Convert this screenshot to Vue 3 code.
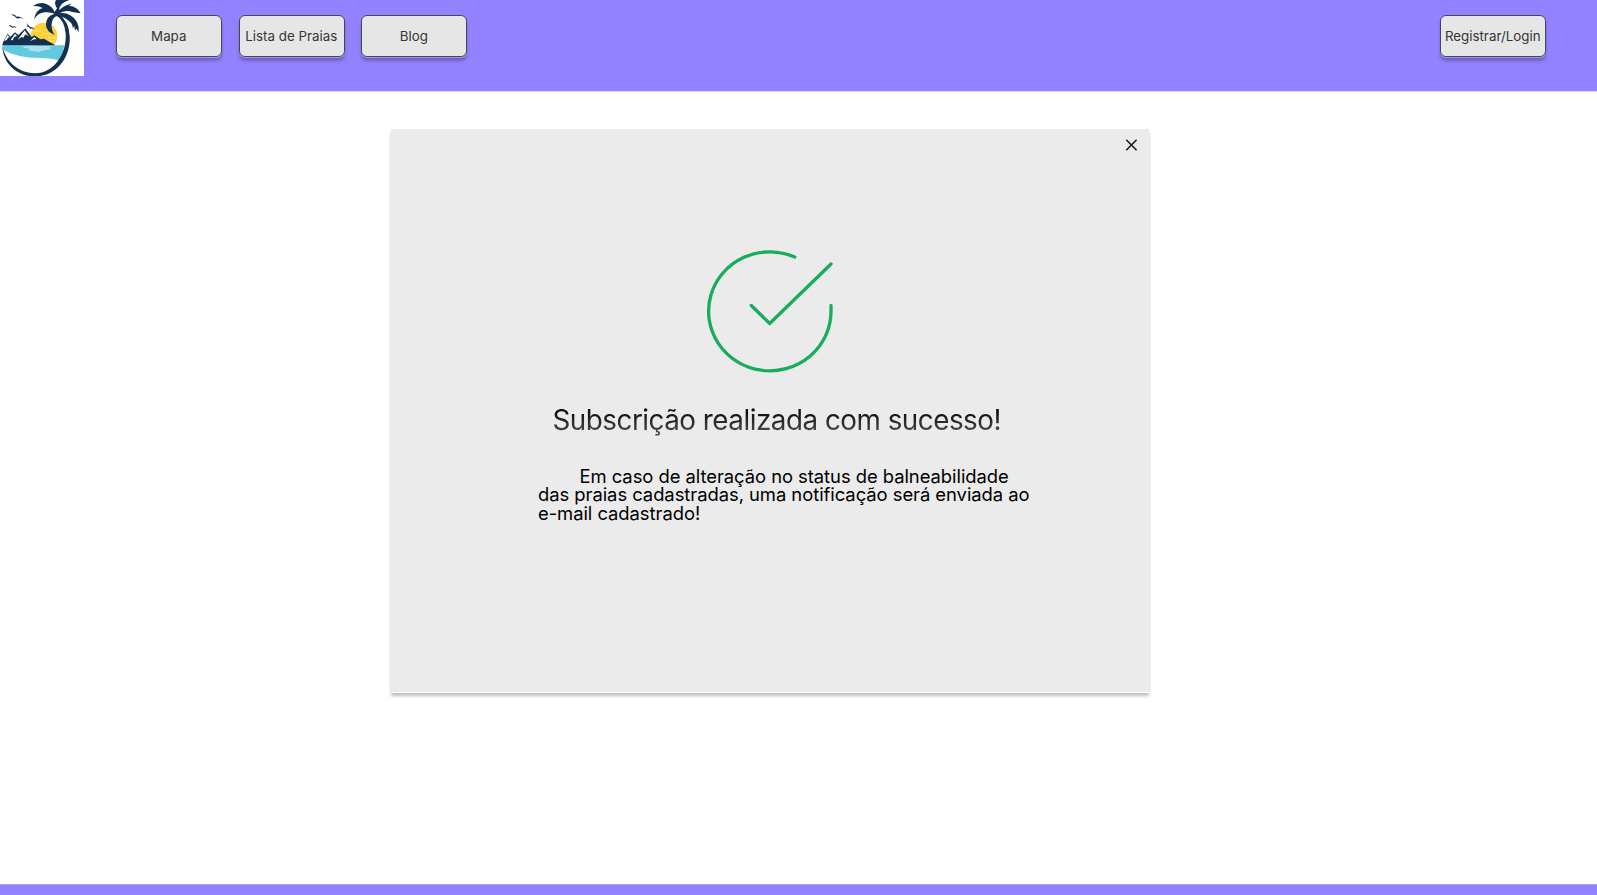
<script setup>
const links = ['Mapa', 'Lista de Praias', 'Blog']
</script>

<template>
  <div class="page">
    <header class="topbar">
      <svg class="logo" viewBox="0 0 252 228" aria-label="Praia">
        <rect width="252" height="228" fill="#fff" />
        <circle cx="132" cy="108" r="40" fill="#fccf36" />
        <path d="M97 93h32M136 88h27M126 101h28M142 113h30M137 123h29" stroke="#ffe391" stroke-width="2.5" />
        <path d="M7 136H193Q190 161 178 182Q156 174 121 174Q48 173 9 149Z" fill="#62c9df" />
        <path d="M66 138H160L147 143L154 147L128 152L116 156L84 151L88 146L73 143Z" fill="#addff2" />
        <path d="M7 136L9 127L23 101L31 110L45 97L55 105L76 85L95 111L103 106L121 118L132 116L166 136Z" fill="#12304f" />
        <path d="M12 123L23 105L30 113L25 112L20 120ZM32 120L45 101L51 108L43 111L38 121ZM53 119L74 91L86 109L76 103L70 113L65 111ZM90 124L103 111L110 118L102 118Z" fill="#fff" />
        <path d="M33 44Q44 41 50 50Q60 47 71 57Q59 52 52 56Q43 45 33 44ZM25 77Q33 74 38 80Q46 77 50 84Q42 80 38 84Q33 78 25 77ZM79 67Q85 76 90 81Q100 80 105 89Q98 84 91 86Q86 79 79 81Q86 79 79 67Z" fill="#12304f" />
        <path d="M171 48Q193 62 197 100C201 160 163 219 106 220C55 220 17 184 7 139C9 191 51 230 106 229C172 229 213 169 209 108Q207 66 178 43Z" fill="#12304f" />
        <path d="M164 36Q158 19 137 11Q118 5 98 18Q118 17 128 24Q108 29 102 58Q114 39 133 37Q150 35 164 41Q135 50 138 76Q140 97 163 104Q151 85 156 66Q160 50 173 48Q190 49 204 61Q219 71 218 84L223 79L225 91L230 86L236 97Q239 62 211 46Q194 36 179 40Q198 29 217 36Q234 38 242 40Q233 20 207 17L215 11Q190 16 177 31Q179 8 208 0H168Q161 10 171 25Z" fill="#12304f" />
      </svg>
      <nav class="links">
        <button v-for="link in links" :key="link" class="btn">{{ link }}</button>
      </nav>
      <button class="btn login">Registrar/Login</button>
    </header>

    <main class="content">
      <section class="dialog">
        <button class="close" aria-label="Fechar">
          <svg viewBox="0 0 12 12"><path d="M1.2.8 11.6 11.2M11.6.8 1.2 11.2" /></svg>
        </button>
        <svg class="success" viewBox="0 0 160 150">
          <path d="M104.8 22A61.2 59.5 0 1 0 141 76.3V70.5" />
          <path d="M61.3 70.5 79.7 88.5 141 29" />
        </svg>
        <h1>Subscrição realizada com sucesso!</h1>
        <p>Em caso de alteração no status de balneabilidade<br />das praias cadastradas, uma notificação será enviada ao<br />e-mail cadastrado!</p>
      </section>
    </main>
    <footer class="bottombar"></footer>
  </div>
</template>

<style>
body {
  margin: 0;
  background: #fff;
}
</style>

<style scoped>
.page {
  display: flex;
  flex-direction: column;
  height: 895px;
  overflow: hidden;
  font-family: Inter, "Liberation Sans", sans-serif;
}
.topbar {
  display: flex;
  align-items: flex-start;
  flex: none;
  height: 91px;
  background: #9282ff;
  box-shadow: 0 1px 0 #dfdaff;
}
.logo {
  display: block;
  width: 84px;
  height: 76px;
}
.links {
  display: flex;
  gap: 16.5px;
  margin: 15px 0 0 32px;
}
.btn {
  box-sizing: border-box;
  width: 106px;
  height: 42px;
  padding: 0 0.5px 0 0;
  border: 1px solid #49464f;
  border-radius: 6px;
  background: #e6e6e6;
  box-shadow: 0 1px 0 #a095f8, 0 4px 3px rgba(0, 0, 0, 0.25);
  color: #353535;
  font: 400 13.35px/41px Inter, "Liberation Sans", sans-serif;
  white-space: nowrap;
}
.login {
  margin: 15px 51px 0 auto;
}
.content {
  flex: 1;
  padding: 38px 0 0 391px;
}
.dialog {
  display: flex;
  flex-direction: column;
  width: 758px;
  height: 563px;
  background: #ebebeb;
  box-shadow: 0 1px 0 #fff, 0 4px 3px rgba(0, 0, 0, 0.25);
}
.close {
  align-self: flex-end;
  width: 12px;
  height: 12px;
  margin: 9.5px 12px 0 0;
  padding: 0;
  border: 0;
  background: none;
}
.close svg {
  display: block;
  width: 12px;
  height: 12px;
  overflow: visible;
  fill: none;
  stroke: #1d1b20;
  stroke-width: 1.6;
}
.success {
  width: 160px;
  height: 150px;
  margin: 84.5px 0 0 299px;
  fill: none;
  stroke: #17ad5b;
  stroke-width: 3.3;
  stroke-linecap: round;
  stroke-linejoin: round;
}
h1 {
  margin: 18px 0 0 161.5px;
  background: linear-gradient(#111 30%, #444 80%);
  background-clip: text;
  color: transparent;
  font-size: 27.8px;
  font-weight: 400;
  letter-spacing: -0.49px;
  line-height: 34px;
  white-space: nowrap;
}
p {
  margin: 29.7px 0 0 147px;
  color: #000;
  font-size: 18.4px;
  letter-spacing: -0.04px;
  line-height: 18.4px;
  text-indent: 41.5px;
  white-space: nowrap;
}
.bottombar {
  flex: none;
  height: 10px;
  border-top: 1px solid #b1a6ff;
  background: #9282ff;
}
</style>
